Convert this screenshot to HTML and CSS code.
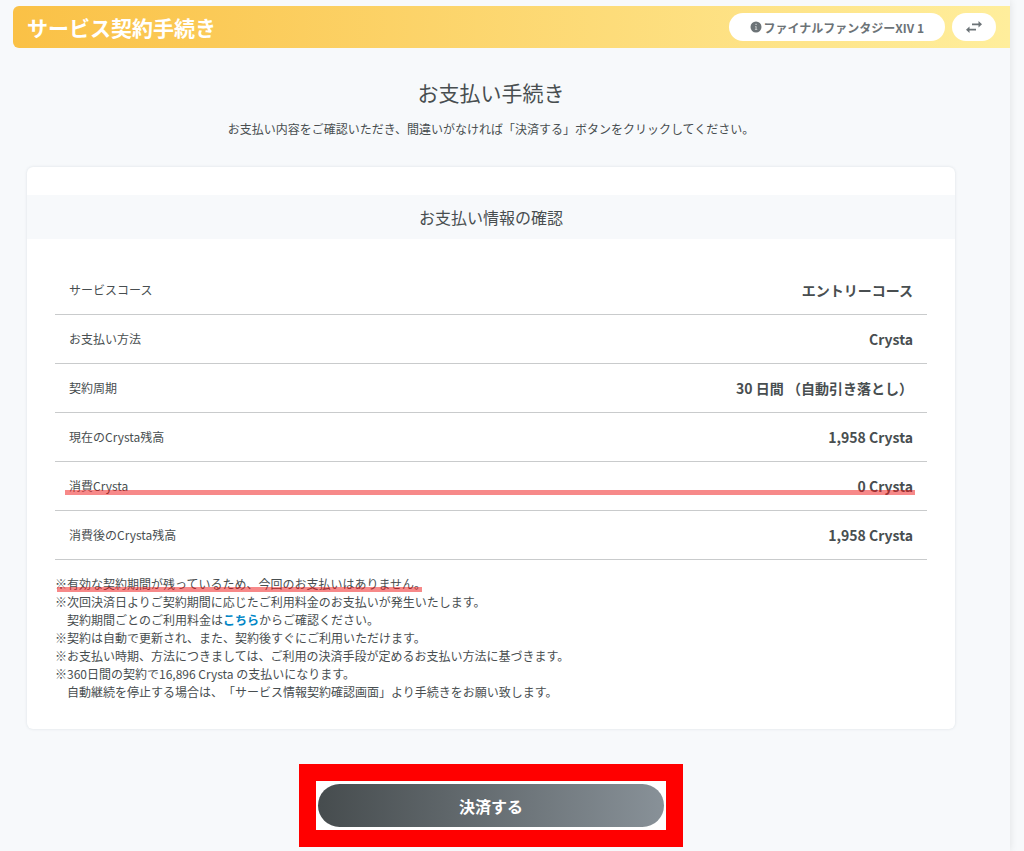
FILE: index.html
```html
<!DOCTYPE html>
<html lang="ja">
<head>
  <meta charset="UTF-8">
  <meta name="viewport" content="width=device-width, initial-scale=1">
  <title>お支払い手続き</title>
  <link rel="stylesheet" href="styles.css">
</head>
<body>
  <div class="page">
    <header class="header">
      <h1 class="header-title">サービス契約手続き</h1>
      <div class="header-actions">
        <button type="button" class="pill">
          <svg class="icon-info" viewBox="0 0 12 12" aria-hidden="true">
            <circle cx="6" cy="6" r="5.5" fill="currentColor"/>
            <path d="M5 5.2h1.6v3h.7v.9H4.9v-.9h.6V6.1H5zM5.4 2.7h1.3v1.4H5.4z" fill="#c9cccd"/>
          </svg>
          ファイナルファンタジーXIV 1
        </button>
        <button type="button" class="pill pill-switch" aria-label="切り替え">
          <svg class="icon-switch" viewBox="0 0 16 12" aria-hidden="true">
            <path d="M6 2.500h6.500V0L16 3.300 12.500 6.500V4.200H6zM10 7.800H3.500V5.500L0 8.700 3.500 12V9.500H10z" fill="currentColor"/>
          </svg>
        </button>
      </div>
    </header>

    <main class="content">
      <h2 class="page-title">お支払い手続き</h2>
      <p class="lead">お支払い内容をご確認いただき、間違いがなければ「決済する」ボタンをクリックしてください。</p>

      <section class="card">
        <h3 class="card-title">お支払い情報の確認</h3>
        <div class="card-body">
          <table class="details">
            <tr><th scope="row">サービスコース</th><td>エントリーコース</td></tr>
            <tr><th scope="row">お支払い方法</th><td>Crysta</td></tr>
            <tr><th scope="row">契約周期</th><td>30 日間 （自動引き落とし）</td></tr>
            <tr><th scope="row">現在のCrysta残高</th><td>1,958 Crysta</td></tr>
            <tr class="marked-row"><th scope="row">消費Crysta</th><td>0 Crysta</td></tr>
            <tr><th scope="row">消費後のCrysta残高</th><td>1,958 Crysta</td></tr>
          </table>

          <ul class="notes">
            <li><span class="marked">※有効な契約期間が残っているため、今回のお支払いはありません。</span></li>
            <li>※次回決済日よりご契約期間に応じたご利用料金のお支払いが発生いたします。<br>契約期間ごとのご利用料金は<a href="#">こちら</a>からご確認ください。</li>
            <li>※契約は自動で更新され、また、契約後すぐにご利用いただけます。</li>
            <li>※お支払い時期、方法につきましては、ご利用の決済手段が定めるお支払い方法に基づきます。</li>
            <li>※360日間の契約で16,896 Crysta の支払いになります。<br>自動継続を停止する場合は、「サービス情報契約確認画面」より手続きをお願い致します。</li>
          </ul>
        </div>
      </section>

      <div class="submit-frame">
        <button type="submit" class="submit">決済する</button>
      </div>
    </main>
  </div>
</body>
</html>
```
FILE: styles.css
```css
* {
  box-sizing: border-box;
}

body {
  margin: 0;
  background: #f7f9fb;
  color: #484e50;
  font-family: "Noto Sans CJK JP", sans-serif;
  font-size: 12px;
  line-height: 18px;
  text-spacing-trim: space-all;
}

button {
  border: none;
  font-family: inherit;
  cursor: pointer;
}

h1, h2, h3, p, ul {
  margin: 0;
}

.page {
  min-height: 100vh;
  margin-right: 14px;
  padding-top: 6px;
  box-shadow: 0 0 8px rgba(0, 0, 0, 0.1);
}

/* header */
.header {
  display: flex;
  justify-content: space-between;
  align-items: center;
  margin-left: 13px;
  padding: 6px 14px;
  height: 42px;
  border-radius: 6px 0 0 6px;
  background: linear-gradient(90deg, #fac146, #ffee9c);
}

.header-title {
  color: #fff;
  font-size: 21px;
  line-height: 30px;
}

.header-actions {
  display: flex;
  gap: 7px;
}

.pill {
  display: flex;
  align-items: center;
  gap: 2px;
  height: 28px;
  padding: 0 21px;
  border-radius: 14px;
  background: #fff;
  color: #6c7377;
  font-size: 12px;
  font-weight: bold;
}

.pill-switch {
  padding: 0 14px;
}

.icon-info {
  width: 12px;
  height: 12px;
}

.icon-switch {
  width: 16px;
  height: 12px;
}

/* content */
.content {
  padding: 28px 55px 4px 27px;
}

.page-title {
  font-size: 21px;
  font-weight: normal;
  line-height: 32px;
  text-align: center;
}

.lead {
  margin: 12px 0 29px;
  text-align: center;
}

.card {
  padding: 28px 0;
  border-radius: 6px;
  background: #fff;
  box-shadow: 0 0 3px rgba(60, 80, 100, 0.15);
}

.card-title {
  padding: 10px;
  background: #f7f9fb;
  font-size: 16px;
  font-weight: normal;
  line-height: 24px;
  text-align: center;
}

.card-body {
  padding: 27px 28px 0;
}

.details {
  width: 100%;
  border-collapse: separate;
  border-spacing: 0;
}

.details th,
.details td {
  height: 49px;
  padding: 0 14px;
  border-bottom: 1px solid #c9cbcc;
}

.details th {
  font-weight: normal;
  text-align: left;
}

.details td {
  font-size: 14px;
  font-weight: bold;
  text-align: right;
}

/* red marker lines */
.marked-row,
.marked {
  position: relative;
}

.marked-row::after,
.marked::after {
  content: "";
  position: absolute;
  height: 5px;
  background: rgba(240, 20, 20, 0.5);
}

.marked-row::after {
  left: 10px;
  right: 12px;
  bottom: 16px;
}

.marked::after {
  left: 2px;
  right: 4px;
  bottom: 0;
}

.notes {
  margin-top: 15px;
  padding: 0 0 0 12px;
  list-style: none;
}

.notes li {
  text-indent: -12px;
}

.notes a {
  color: #0086c6;
  font-weight: bold;
  text-decoration: none;
}

/* submit */
.submit-frame {
  width: 384px;
  max-width: 100%;
  margin: 35px auto 0;
  padding: 3px 2px;
  border: 17px solid #f00;
  background: #fff;
}

.submit {
  display: block;
  width: 100%;
  height: 43px;
  border-radius: 22px;
  background: linear-gradient(90deg, #464c4e, #889198);
  color: #fff;
  font-size: 16px;
  font-weight: bold;
}
```
